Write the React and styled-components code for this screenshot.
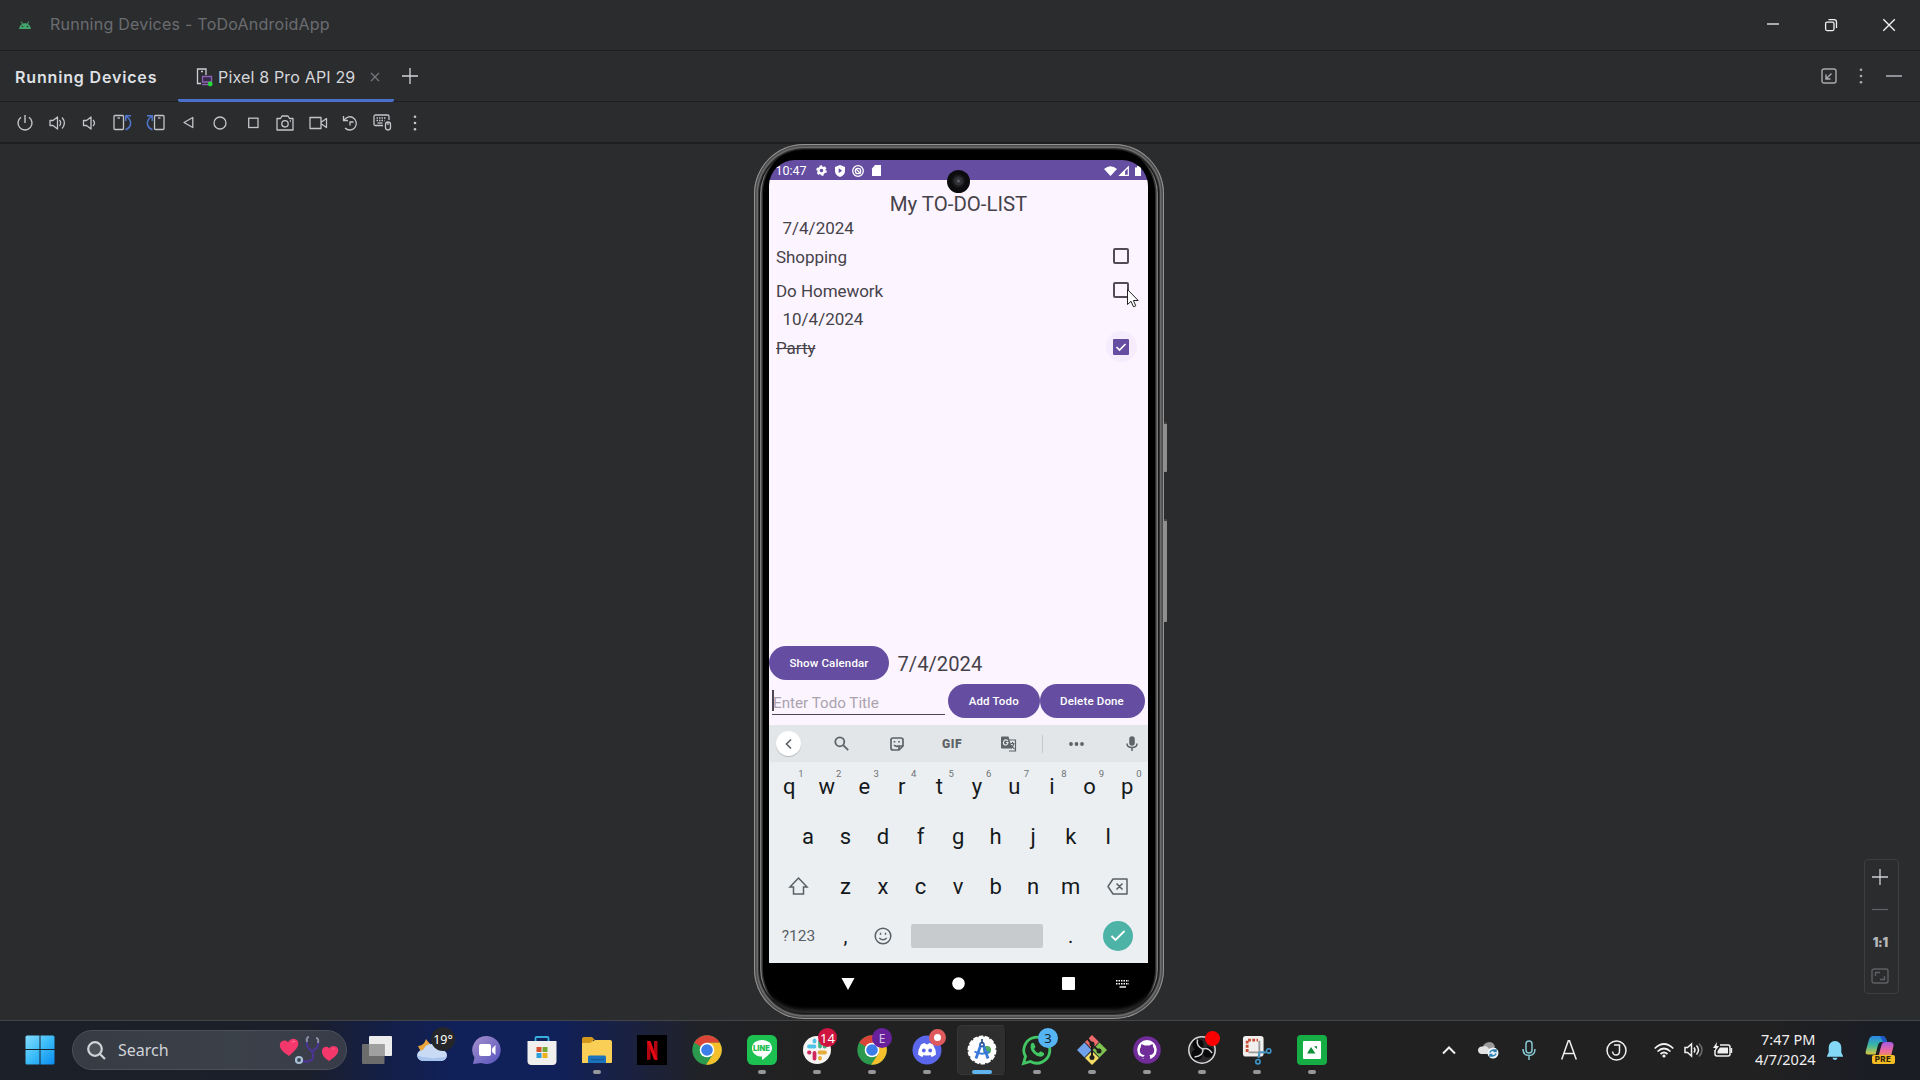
import React from 'react';
import styled, { createGlobalStyle } from 'styled-components';

const Global = createGlobalStyle`
  * { box-sizing: border-box; }
  html, body { margin: 0; padding: 0; background: #2b2c2e; overflow: hidden; }
`;

const Page = styled.div`
  width: 1920px;
  height: 1080px;
  display: flex;
  flex-direction: column;
  background: #2b2c2e;
  font-family: Inter, "Liberation Sans", sans-serif;
  overflow: hidden;
`;

const Icon = styled.svg`
  display: block;
  flex: none;
  overflow: visible;
  fill: none;
  stroke: currentColor;
  stroke-width: ${p => p.$w || 1.3};
`;

/* ---------- Studio window chrome ---------- */

const Bar = styled.div`
  display: flex;
  align-items: center;
  flex: none;
  height: ${p => p.$h}px;
  border-bottom: ${p => p.$line || 1}px solid #1e1f22;
`;

const WindowTitle = styled.div`
  margin-left: 19px;
  padding-bottom: 2px;
  font-size: 16px;
  letter-spacing: 0.24px;
  color: #6a6c70;
  flex: 1;
`;

const AppLogo = styled.div`
  margin-left: 19px;
  width: 12px;
`;

const WindowButton = styled.div`
  width: 58px;
  display: flex;
  justify-content: center;
  padding: 0 4px 0 0;
  color: #f2f2f2;
`;

const PaneTitle = styled.div`
  width: 178px;
  padding: 2px 0 0 15px;
  font-size: 16px;
  font-weight: 600;
  letter-spacing: 0.84px;
  color: #dfe1e5;
`;

const Tab = styled.div`
  width: 216px;
  height: 51px;
  padding: 3px 0 0 18px;
  display: flex;
  align-items: center;
  align-self: flex-start;
  color: #d5d7db;
  font-size: 16px;
  border-bottom: 3px solid #4a70cc;
  border-radius: 0 0 2px 2px;
  z-index: 1;
`;

const TabLabel = styled.span`
  width: 152px;
  margin-left: 4px;
  letter-spacing: 0.17px;
  white-space: nowrap;
`;

const PaneActions = styled.div`
  display: flex;
  margin-left: auto;
  color: #a9abaf;
`;

const Slot = styled.div`
  width: ${p => p.$w}px;
  flex: none;
  display: flex;
  align-items: center;
  justify-content: center;
  color: ${p => p.$c || 'inherit'};
`;

const Tools = styled(Bar)`
  padding: 1.5px 0 0 9px;
  color: #c3c5c9;
`;

/* ---------- Emulator ---------- */

const Stage = styled.div`
  height: 876px;
  flex: none;
  display: flex;
  justify-content: center;
  align-items: flex-start;
  padding-right: 3px;
  position: relative;
`;

const Phone = styled.div`
  position: relative;
  width: 410px;
  height: 875px;
  padding: 16px 15.5px 0;
  border-radius: 50px;
  background: #000;
  box-shadow:
    inset 0 0 0 1px #929292,
    inset 0 0 0 2.5px #4c4c4c,
    inset 0 0 0 4px #6b6b6b,
    inset 0 0 0 5px #353535,
    inset 0 0 0 6px #171717,
    inset 7.5px 0 0 0 #7a7a7a,
    inset -7.5px 0 0 0 #7a7a7a,
    inset 9px 0 0 0 #2c2c2c,
    inset -9px 0 0 0 #2c2c2c,
    inset 0 -9px 4px 0 #333;
`;

const SideKey = styled.div`
  position: absolute;
  left: 410px;
  top: ${p => p.$top}px;
  width: 3px;
  height: ${p => p.$h}px;
  background: #8e8e8e;
  border-top: 2px solid #444;
  border-radius: 0 1px 1px 0;
`;

const Camera = styled.div`
  position: absolute;
  left: 193.5px;
  top: 26px;
  width: 23px;
  height: 23px;
  border-radius: 50%;
  background: radial-gradient(circle at 50% 48%, #5d5e64 0 1px, #303136 2px 4px, #19191c 5px 6px, #0c0b0d 7px);
`;

const Screen = styled.div`
  width: 379px;
  display: flex;
  flex-direction: column;
  border-radius: 26px 26px 0 0;
  overflow: hidden;
  font-family: Roboto, sans-serif;
`;

const StatusBar = styled.div`
  height: 20px;
  flex: none;
  display: flex;
  align-items: center;
  padding: 1px 4px 0 6.5px;
  background: #654ea1;
  color: #fff;
  font-size: 12.5px;
`;

const StatusTime = styled.span`
  width: 36.5px;
`;

const StatusSlot = styled.div`
  width: ${p => p.$w}px;
  margin-left: ${p => p.$push ? 'auto' : 0};
  display: flex;
  justify-content: center;
`;

const AppView = styled.div`
  height: 545px;
  background: #fcf5ff;
`;

const TodoArea = styled.div`
  height: 466px;
  padding-top: 10px;
  color: #46424a;
`;

const ListTitle = styled.div`
  height: 26.5px;
  line-height: 28px;
  text-align: center;
  font-size: 20.4px;
`;

const DateHeading = styled.div`
  height: 23.2px;
  line-height: 22.5px;
  padding-left: 13.5px;
  font-size: 17px;
`;

const TodoRow = styled.div`
  height: 34px;
  display: flex;
  align-items: center;
  justify-content: space-between;
  padding: 0 19px 0 7px;
  font-size: 17px;
  letter-spacing: -0.05px;
  text-decoration: ${p => p.$done ? 'line-through' : 'none'};
`;

const Check = styled.span`
  width: 16px;
  height: 16px;
  margin-bottom: ${p => p.$on ? 0 : 2}px;
  border-radius: ${p => p.$on ? 1 : 2}px;
  border: ${p => p.$on ? 0 : '2px solid #514c57'};
  background: ${p => p.$on ? '#654ea1' : 'transparent'};
  color: #fff;
  display: flex;
  align-items: center;
  justify-content: center;
`;

const Halo = styled.span`
  width: 31px;
  height: 31px;
  margin: 0 -7.5px 2px 0;
  border-radius: 50%;
  background: #f5ecfd;
  display: flex;
  align-items: center;
  justify-content: center;
`;

const Pill = styled.button`
  width: ${p => p.$w}px;
  height: 34px;
  padding: 0;
  flex: none;
  border: 0;
  border-radius: 17px;
  background: #654ea1;
  color: #fff;
  font: 500 11.5px Roboto, sans-serif;
  letter-spacing: 0.15px;
`;

const FormRow = styled.div`
  display: flex;
  align-items: center;
  height: ${p => p.$h}px;
  padding: ${p => p.$top || 0}px 0 0 ${p => p.$pad || 0}px;
`;

const PickedDate = styled.div`
  margin-left: 8.5px;
  padding-top: 1px;
  font-size: 20.2px;
  color: #46424a;
`;

const Field = styled.div`
  width: 173px;
  height: 28px;
  margin: 0 3px 0 0;
  border-bottom: 1px solid #4b464f;
  color: #aaa3ae;
  font-size: 15.2px;
  padding-top: 4px;
  display: flex;
  align-items: center;
`;

const Caret = styled.span`
  width: 1.5px;
  height: 21px;
  margin: -4px -0.5px 0 0;
  background: #4b464f;
`;

/* ---------- Soft keyboard ---------- */

const Suggestions = styled.div`
  height: 37px;
  flex: none;
  display: flex;
  align-items: center;
  background: #e3e6e8;
  color: #5d6367;
`;

const RoundBack = styled.div`
  width: 25px;
  height: 25px;
  border-radius: 50%;
  background: #fff;
  box-shadow: 0 1px 1px #0003;
  display: flex;
  align-items: center;
  justify-content: center;
`;

const Gif = styled.span`
  font: 900 12px Roboto, sans-serif;
  letter-spacing: 0.6px;
`;

const Divider = styled.div`
  width: 1px;
  height: 18px;
  background: #c6cacc;
`;

const Keys = styled.div`
  height: 201px;
  padding: 0 2px 0 1.2px;
  background: #eceff1;
  color: #14191c;
`;

const KeyRow = styled.div`
  height: 49.7px;
  display: flex;
  justify-content: center;
`;

const Key = styled.div`
  width: ${p => 37.56 * (p.$span || 1)}px;
  position: relative;
  display: flex;
  align-items: center;
  justify-content: center;
  font-size: ${p => p.$size || 22}px;
  color: ${p => p.$dim ? '#596066' : 'inherit'};
`;

const Hint = styled.sup`
  position: absolute;
  left: 28px;
  top: 6px;
  font-size: 9.5px;
  line-height: 12px;
  color: #6d7377;
`;

const SpaceBar = styled.div`
  width: 132px;
  height: 24px;
  border-radius: 2px;
  background: #c8cbcd;
`;

const Enter = styled.div`
  width: 30px;
  height: 30px;
  border-radius: 50%;
  background: #4cb3a6;
  color: #fff;
  display: flex;
  align-items: center;
  justify-content: center;
`;

const NavBar = styled.div`
  height: 41px;
  color: #fff;
  display: flex;
  align-items: center;
`;

const Pointer = styled.div`
  position: absolute;
  left: 1127px;
  top: 145px;
`;

const ZoomPanel = styled.div`
  position: absolute;
  left: 1864px;
  top: 715px;
  width: 35px;
  height: 135px;
  border: 1px solid #3d3f42;
  border-radius: 4px;
  padding-right: 2.5px;
`;

const ZoomItem = styled.div`
  height: 33px;
  display: flex;
  align-items: center;
  justify-content: center;
  color: ${p => p.$c};
  font: 900 12.5px Inter, sans-serif;
  letter-spacing: -0.3px;
`;

/* ---------- Taskbar ---------- */

const Taskbar = styled.div`
  height: 60px;
  flex: none;
  position: relative;
  display: flex;
  align-items: center;
  padding: 0 0 1px 12.5px;
  border-top: 1px solid #444548;
  background: linear-gradient(90deg, #1c2029 0, #1b1f29 300px, #141f47 385px, #102058 450px, #102058 560px, #1a2142 625px, #212227 700px, #212121 800px, #212121 1760px, #1b1d25 1880px);
  color: #f0f0f0;
  font-family: "Noto Sans", sans-serif;
`;

const Cell = styled.div`
  width: 55px;
  height: 58px;
  flex: none;
  position: relative;
  display: flex;
  align-items: center;
  justify-content: center;
`;

const Art = styled.div`
  position: relative;
  display: flex;
  justify-content: center;
`;

const Highlight = styled.div`
  position: absolute;
  left: 3px;
  top: 4px;
  width: 49px;
  height: 50px;
  border-radius: 5px;
  background: #2e2e2e;
  border: 1px solid #363636;
  border-right-color: #1c1c1c;
`;

const Running = styled.div`
  position: absolute;
  left: 50%;
  bottom: 5px;
  width: ${p => p.$active ? 20 : 8}px;
  height: 4px;
  transform: translateX(-50%);
  border-radius: 2px;
  background: ${p => p.$active ? '#61b5ee' : '#96979a'};
`;

const Badge = styled.div`
  position: absolute;
  left: ${p => p.$x}px;
  top: ${p => p.$y}px;
  width: ${p => p.$s}px;
  height: ${p => p.$s}px;
  border-radius: 50%;
  background: ${p => p.$bg};
  color: ${p => p.$c || '#fff'};
  border: ${p => p.$ring || '0'};
  font-size: ${p => p.$fs || 12}px;
  display: flex;
  align-items: center;
  justify-content: center;
`;

const SearchBox = styled.div`
  width: 275px;
  height: 40px;
  margin: 0 2px 0 4.5px;
  flex: none;
  border-radius: 20px;
  background: linear-gradient(90deg, #363b44, #3b4149 60%, #383c4a);
  border: 1px solid #4b5059;
  display: flex;
  align-items: center;
  padding-left: 14px;
  font-size: 16px;
  color: #d0d3d7;
`;

const SearchLabel = styled.span`
  margin-left: 12px;
  width: 161px;
`;

const Tray = styled.div`
  display: flex;
  align-items: center;
  margin-left: 89.5px;
`;

const Clock = styled.div`
  width: 75px;
  padding-bottom: 2px;
  text-align: right;
  font-size: 14.5px;
  line-height: 20px;
  white-space: nowrap;
`;

const CopilotBox = styled.div`
  position: relative;
  width: 30px;
  height: 30px;
`;

const Pre = styled.span`
  position: absolute;
  left: 7px;
  top: 20px;
  width: 23px;
  height: 9px;
  border-radius: 2px;
  background: #f5bd24;
  color: #30250a;
  font: 800 8px/9px Inter, sans-serif;
  text-align: center;
  letter-spacing: 0.3px;
`;

const LineText = styled.span`
  position: absolute;
  top: 9px;
  font: 900 7.5px/9px Inter, sans-serif;
  color: #1fbf55;
`;

/* ---------- Drawings ---------- */

const S = ({ s = 16, w, h, vb, sw, children, ...rest }) => (
  <Icon width={w || s} height={h || s} viewBox={vb || `0 0 ${w || s} ${h || s}`} $w={sw} {...rest}>{children}</Icon>
);

const Plus = () => <S s={16}><path d="M8 0v16M0 8h16" /></S>;

const MoreDots = () => (
  <S w={4} h={16} stroke="none"><g fill="currentColor" stroke="none"><circle cx="2" cy="1.700" r="1.300" /><circle cx="2" cy="8" r="1.300" /><circle cx="2" cy="14.300" r="1.300" /></g></S>
);

const toolIcons = [
  <S s={16} sw={1.4}><path d="M8 0v8M4 2.2a7 7 0 1 0 8 0" /></S>,
  <S w={17} h={16}><path d="M1 5.500h3L8.500 2v12L4 10.500H1z" strokeLinejoin="round" /><path d="M10.500 5Q12.800 8 10.500 11M13 2.500Q17.800 8 13 13.500" /></S>,
  <S w={17} h={16}><path d="M1.500 5.500h3L9 2v12L4.500 10.500h-3z" strokeLinejoin="round" /><path d="M11 5Q14 8 11 11" /></S>,
  <S w={19} h={17}><rect x="1" y="1.500" width="9.500" height="14" rx="1" /><path d="M4.500 4h2.500" /><path stroke="#5078d0" strokeWidth="1.500" d="M12.800 7V1.800H18M13 2q5.500 4 4.500 8.500-.8 3.500-5 5.300" /></S>,
  <S w={19} h={17}><rect x="8.500" y="1.500" width="9.500" height="14" rx="1" /><path d="M12 4h2.500" /><path stroke="#5078d0" strokeWidth="1.500" d="M6.200 7V1.800H1M6 2Q.5 6 1.500 10.500q.8 3.500 5 5.300" /></S>,
  <S w={12} h={13}><path d="M10.800 1.500v10L2 6.500z" strokeLinejoin="round" /></S>,
  <S s={14}><circle cx="7" cy="7" r="6" /></S>,
  <S s={12}><rect x="1.700" y="1.200" width="9.300" height="9.300" /></S>,
  <S w={18} h={16}><path d="M1 3.500h3.500l1.500-2.500h6l1.500 2.500H17V15H1z" strokeLinejoin="round" /><circle cx="9" cy="8.800" r="3.200" /><path d="M13.800 6h1.200" /></S>,
  <S w={18} h={14}><path d="M1 1.500h11v11H1zM12.500 6L17.500 2.500v9L12.500 8" strokeLinejoin="round" /></S>,
  <S s={16}><path d="M1.500 1v4.500H6M1.800 5.500A6.600 6.600 0 1 1 3 13M8 10.500V7h3.500" /></S>,
  <S w={19} h={17}><path d="M10 11.500H2.500q-1.500 0-1.500-1.500V2.500Q1 1 2.500 1h12Q16 1 16 2.500V6" /><path d="M3.500 4h10M3.500 6.500h8" strokeDasharray="1.500 1" /><path d="M4.500 9h5" /><rect x="12.500" y="8" width="5" height="8" rx="2.400" /><path d="M15 8v3" /></S>,
  <MoreDots />,
];

const Chrome = () => (
  <S s={30} vb="0 0 48 48" sw={0.01}>
    <circle cx="24" cy="24" r="23.500" fill="#2c9a4e" />
    <path fill="#db4437" d="M24 24L3.700 12.200A23.500 23.500 0 0 1 44.400 12.300H24z" />
    <path fill="#f6bf2c" d="M44.400 12.300A23.500 23.500 0 0 1 22.500 47.500L34.200 29.800 24 12.300z" />
    <circle cx="24" cy="24" r="11.700" fill="#fff" />
    <circle cx="24" cy="24" r="9.300" fill="#3b7de9" />
  </S>
);

const Hearts = () => (
  <S w={62} h={28} sw={0.01}>
    <path fill="#f5386b" d="M10 20C6 17 .5 14 .800 8.500 1.500 4 7.500 3.300 9 6.500 11 2 17 1.500 19 5.500c2 5-4 10-9 14.500z" />
    <path fill="#f5386b" d="M50 25c-4.500-3-7.500-6-7-10.500.5-4 5.500-4.800 7.500-2C52 9 58 9.500 59 13c1.300 5-4 8.500-9 12z" />
    <path fill="#ff7c9d" d="M12 7q2.500-4 5-1-2-1-5 1zM52 14q2-3 4-1.200-2-.2-4 1.200z" />
    <path stroke="#4b3494" strokeWidth="2.200" fill="none" d="M28 5q-1 7 5 10 7-3 6-9M33 15q3 8-2 10-5 1.500-8-.5" />
    <path stroke="#8d8fa5" strokeWidth="2" fill="none" d="M28 6q-1-5 2-5M39 7q1-5-2-5" />
    <circle cx="20" cy="24" r="3" fill="#3a4758" stroke="#a8c0d4" strokeWidth="2.200" />
  </S>
);

const WindowsLogo = () => (
  <S s={30} sw={0.01}>
    <defs><linearGradient id="win" x1="0" y1="0" x2="1" y2="1"><stop offset="0" stopColor="#86dcff" /><stop offset=".5" stopColor="#3bbcf8" /><stop offset="1" stopColor="#0a8cf0" /></linearGradient></defs>
    <path fill="url(#win)" d="M2 .500h12.500V14H.500V2Q.500.500 2 .500zM15.500.500H28q1.500 0 1.500 1.500v12h-14zM.500 15h14v14.500H2Q.500 29.500.500 28zM15.500 15h14v13q0 1.500-1.500 1.500H15.500z" />
  </S>
);

const TaskView = () => (
  <S w={30} h={28} sw={0.01}><rect x="7" y="0" width="23" height="20" rx="1" fill="#ececec" /><rect x="0" y="8" width="22.500" height="20" rx="1" fill="#6c6c6c" /><rect x="7" y="8" width="15.500" height="12" fill="#a0a0a0" /></S>
);

const Weather = () => (
  <S w={32} h={24} sw={0.01}>
    <path fill="#eba53b" d="M2 8q6 0 8-7 4 6 9 8l-6 7-8-2z" />
    <path fill="#c9daf5" d="M8 23q-7-.500-7-6 1-5 6-5 3-7 10-6 6 1 7 6 7 0 7 5.500-1 5-6 5.500z" />
    <path fill="#a9c3ef" d="M1 17q1 6 7 6h17q5-.500 6-5-3 2-8 1.500-7 1.500-11 0-7 0-11-2.500z" />
  </S>
);

const Chat = () => (
  <S s={30} sw={0.01}>
    <defs><linearGradient id="chat" x1="0" y1="0" x2="1" y2="1"><stop offset="0" stopColor="#a58fcb" /><stop offset="1" stopColor="#5654c0" /></linearGradient></defs>
    <path fill="url(#chat)" d="M15 1a14 14 0 1 1-5.500 27L1 29l1.500-6.500A14 14 0 0 1 15 1z" />
    <rect x="7" y="9" width="12" height="12" rx="2" fill="#fff" /><path fill="#fff" d="M20 13.500l3.500-3.500v10L20 17z" />
  </S>
);

const Store = () => (
  <S s={30} sw={0.01}>
    <path d="M8.500 7V3q0-1 1-1h11q1 0 1 1v4" stroke="#38aede" strokeWidth="1.800" fill="none" />
    <path fill="#f0f0ee" d="M.500 6h29v20q0 4-4 4h-21q-4 0-4-4z" />
    <path fill="#d5512b" d="M9.500 12h5v5h-5z" /><path fill="#74a832" d="M15.500 12h5v5h-5z" /><path fill="#2f9fd9" d="M9.500 18h5v5h-5z" /><path fill="#efb11f" d="M15.500 18h5v5h-5z" />
  </S>
);

const Folder = () => (
  <S s={30} sw={0.01}>
    <path fill="#d3971c" d="M0 4q0-2 2-2h8l3 3h-2v4H0z" /><path fill="#f9cf55" d="M0 8h8l5-3h15q2 0 2 2v20q0 1-1 1H0z" />
    <path fill="#1a74bd" d="M6 28v-6q0-1.500 1.500-1.500h15q1.500 0 1.500 1.500v6z" /><path fill="#165c97" d="M9 24h13v1.200H9z" />
  </S>
);

const Netflix = () => (
  <S s={30} sw={0.01}><path fill="#000" d="M0 0h30v30H0z" /><path fill="#b1060f" d="M10 6h3.500v18.500L10 25zM17 6h3.500v19l-3.500-.500z" /><path fill="#e50914" d="M10 6h3.500l7 19-3.500-.500z" /></S>
);

const Line = () => (
  <>
    <S s={30} sw={0.01}><rect width="30" height="30" rx="6" fill="#1dc152" /><path fill="#fff" d="M15 5c6 0 10 3.600 10 8.200C25 18 19 22 15 25v-3.500c-6 0-10-3.700-10-8.300S9 5 15 5z" /></S>
    <LineText>LINE</LineText>
  </>
);

const Slack = () => (
  <S s={30} sw={0.01}>
    <circle cx="15" cy="15" r="14" fill="#f7f4f4" />
    <g strokeWidth="3.800" strokeLinecap="round">
      <path stroke="#4fc4e8" d="M7 11.500h5.500M12.500 5.500v1" /><path stroke="#40b584" d="M18 6.500v5M22.500 11.500h.5" />
      <path stroke="#e5ae38" d="M17.500 17.500H23M18 23v.500" /><path stroke="#cf285d" d="M12.500 18v5.500M7 17.500h.500" />
    </g>
  </S>
);

const Discord = () => (
  <S s={30} sw={0.01}>
    <circle cx="15" cy="15" r="14.500" fill="#5b67ea" />
    <path fill="#fff" d="M9 9.500q2-1.200 4-1.500l.800 1.300h2.400L17 8q2 .3 4 1.500 3 5 3 10-2 1.800-4.500 2.500l-1-2q-3.500 1-7 0l-1 2Q8 21.300 6 19.500q0-5 3-10z" /><circle cx="11.800" cy="15.500" r="1.900" fill="#5b67ea" /><circle cx="18.200" cy="15.500" r="1.900" fill="#5b67ea" />
  </S>
);

const Studio = () => (
  <S s={30} sw={0.01}>
    <circle cx="15" cy="15" r="13.500" fill="#fff" stroke="#fff" strokeWidth="2" strokeDasharray="4.500 1.500" />
    <circle cx="20" cy="15" r="4" fill="#4cab5c" />
    <path stroke="#3a78dc" strokeWidth="2.800" d="M14.500 8L9 23.500M15.500 8L21 23.500" /><path stroke="#3a78dc" strokeWidth="2" d="M7.500 16.500q7.500 4.500 15 0" />
    <circle cx="15" cy="9.500" r="2.700" fill="#2f5fae" /><path stroke="#23437c" strokeWidth="1.600" d="M15 4v5" /><circle cx="15" cy="9.500" r="1.100" fill="#fff" />
  </S>
);

const WhatsApp = () => (
  <S s={32} sw={0.01}>
    <path stroke="#42c764" strokeWidth="2.800" fill="#20251f" d="M2.500 29.500l2-7a13 13 0 1 1 5 5z" />
    <path fill="#42c764" d="M10 10q1.500-2 3-.500l1.500 3.500-1.500 2q1.500 3 4.500 4l2-1.800 3.500 1.800q.5 3-3 3.800-3.500.4-7.500-3.500t-2.500-9.300z" />
  </S>
);

const Git = () => (
  <S s={30} sw={0.01}>
    <path fill="#ee6b6b" d="M15 0l7 7-7 7-7-7z" /><path fill="#6fa2ea" d="M7.500 7.500l7 7.500-7 7.500L0 15z" /><path fill="#81c351" d="M22.500 7.500L30 15l-7.500 7.500-7-7.500z" /><path fill="#f3dc64" d="M15 16l7 7-7 7-7-7z" />
    <path stroke="#1e1e1e" strokeWidth="2" d="M10 3l5 6v14M15 10l7 6" /><circle cx="15" cy="9" r="2.500" fill="#1e1e1e" /><circle cx="15" cy="22.500" r="2.500" fill="#1e1e1e" /><circle cx="22" cy="16" r="2.500" fill="#1e1e1e" />
  </S>
);

const GitHub = () => (
  <S s={28} vb="0 0 30 30" sw={0.01}>
    <circle cx="15" cy="15" r="14.800" fill="#702c98" /><circle cx="15" cy="14.800" r="10.500" fill="#fff" />
    <path fill="#702c98" d="M9 8.500l3.500 1.800q2.500-.5 5 0L21 8.500l.7 3.500q1.300 1.800 1 4-.6 4-5.200 4.500.9 1 .9 2.500v4h-6.900v-3q-4 .6-4.500-3.300 2.500 2.300 4.500 1.200l1-1.400Q7.900 20 7.300 16q-.2-2.200 1-4z" />
  </S>
);

const Obs = () => (
  <S s={30} sw={0.01}>
    <circle cx="15" cy="15" r="13.200" fill="#29272a" stroke="#d9d9d9" strokeWidth="1.500" />
    <g fill="#08080a"><circle cx="11" cy="9.500" r="5.500" /><circle cx="10" cy="19.500" r="5.500" /><circle cx="21" cy="17" r="5.500" /></g>
    <g stroke="#d0d0d0" strokeWidth="1.500" fill="none"><path d="M10.500 4.500q-1.500 7 5.500 9.500" /><path d="M16 14q5-2 9 4" /><path d="M16 14q.5 7-8.500 8" /></g>
  </S>
);

const Snip = () => (
  <S s={30} vb="0 0 32 32" sw={0.01}>
    <rect x="1" y="1" width="22" height="22" rx="3" fill="#f2f0ef" /><path d="M5.500 18V5.500H17" fill="none" stroke="#c74b32" strokeWidth="3" strokeDasharray="3 1.500" />
    <path d="M18.500 6v18M7 18.500h18" stroke="#9a9a9c" strokeWidth="2" /><path d="M18.500 18.500l-1 6M18.500 18.500h7" stroke="#3f97cc" strokeWidth="2" /><circle cx="28.500" cy="17" r="2.300" fill="none" stroke="#3f97cc" strokeWidth="1.700" /><circle cx="17" cy="28.500" r="2.300" fill="none" stroke="#3f97cc" strokeWidth="1.700" />
  </S>
);

const Photo = () => (
  <S s={30} sw={0.01}><rect width="30" height="30" rx="4" fill="#17ad45" /><rect x="6" y="6" width="18" height="18" rx="1" fill="#fff" /><path fill="#12903b" d="M10 18.500l4-6.500 4.500 6.500zM17 11.500l3-.500v3z" /></S>
);

const Copilot = () => (
  <CopilotBox>
    <S s={30} sw={0.01}>
      <defs>
        <linearGradient id="cpa" x1="0" y1="0" x2="0" y2="1"><stop offset="0" stopColor="#2a86e8" /><stop offset=".5" stopColor="#3bb8a2" /><stop offset="1" stopColor="#d8c63c" /></linearGradient>
        <linearGradient id="cpb" x1="0" y1="0" x2="0" y2="1"><stop offset="0" stopColor="#a45ae6" /><stop offset=".6" stopColor="#ea6aa0" /><stop offset="1" stopColor="#f08a62" /></linearGradient>
      </defs>
      <path fill="url(#cpa)" d="M8 1h9q3 0 4 3l1 3h-6q-2 0-3 3l-2.500 9.500H3Q0 19.500.800 16L4 4.500Q5 1 8 1z" />
      <path fill="url(#cpb)" d="M20 7h5q4 0 3.500 4L26 21H13.500l3-11q.8-3 3.500-3z" />
      <path fill="#1f58c8" d="M15 1h2q3 0 4 3l1 3h-4z" />
    </S>
    <Pre>PRE</Pre>
  </CopilotBox>
);

const apps = [
  { art: <Chat /> }, { art: <Store /> }, { art: <Folder />, run: true }, { art: <Netflix /> }, { art: <Chrome /> },
  { art: <Line />, run: true },
  { art: <Slack />, run: true, badge: <Badge $x={29} $y={7} $s={19} $bg="#cf1440" $fs={13}>14</Badge> },
  { art: <Chrome />, run: true, badge: <Badge $x={28} $y={7} $s={20} $bg="#68219b" $c="#d9c2e8">E</Badge> },
  { art: <Discord />, run: true, badge: <Badge $x={30} $y={8} $s={17} $bg="#fff" $ring="5px solid #df5a5c" /> },
  { art: <Studio />, run: true, active: true },
  { art: <WhatsApp />, run: true, badge: <Badge $x={29} $y={7} $s={20} $bg="#55b4f2" $c="#14232e" $fs={13}>3</Badge> },
  { art: <Git />, run: true }, { art: <GitHub />, run: true },
  { art: <Obs />, run: true, badge: <Badge $x={31} $y={10} $s={15} $bg="#fb0000" /> },
  { art: <Snip />, run: true }, { art: <Photo />, run: true },
];

const topLetters = 'qwertyuiop'.split('');
const hints = '1234567890'.split('');

const Keyboard = () => (
  <>
    <Suggestions>
      <Slot $w={39}><RoundBack><S s={10} sw={1.7}><path d="M7 .500L2.500 5 7 9.500" /></S></RoundBack></Slot>
      <Slot $w={66}><S s={15} sw={1.8}><circle cx="5.800" cy="5.800" r="4.500" /><path d="M9.200 9.200l5 5" /></S></Slot>
      <Slot $w={46}><S s={14} sw={1.7}><path d="M9 13H3q-2 0-2-2V3q0-2 2-2h8q2 0 2 2v6zM9 13V9h4" /><path d="M4.500 4v1.500M9 4v1.500M4 8q2.500 2.500 4.500.500" /></S></Slot>
      <Slot $w={64}><Gif>GIF</Gif></Slot>
      <Slot $w={50}><S s={16} sw={1.2}><path d="M6 4h8.500v11H8" /><path stroke="none" fill="currentColor" d="M1 .500h6.500L11 12.500H1q-1 0-1-1v-10q0-1 1-1z" /><path stroke="#e3e6e8" d="M7 5Q4.500 2.800 3 5q-1.500 3 1 4 2.500.300 3-2.500H5" /><path d="M9.500 7.500h4M11.500 6v1.500M13 7.500q-1 3-3 4.500M10 9q1 2 3.500 4" /></S></Slot>
      <Slot $w={17}><Divider /></Slot>
      <Slot $w={51}><S w={15} h={4} stroke="none"><g fill="currentColor" stroke="none"><circle cx="2" cy="2" r="1.900" /><circle cx="7.500" cy="2" r="1.900" /><circle cx="13" cy="2" r="1.900" /></g></S></Slot>
      <Slot $w={59}><S w={12} h={16} sw={1.5}><rect x="4" y="1" width="4" height="8" rx="2" fill="currentColor" /><path d="M1 7.500q0 4 5 4t5-4M6 11.500V15" /></S></Slot>
    </Suggestions>
    <Keys>
      <KeyRow>{topLetters.map((l, i) => <Key key={l}>{l}<Hint>{hints[i]}</Hint></Key>)}</KeyRow>
      <KeyRow>{'asdfghjkl'.split('').map(l => <Key key={l}>{l}</Key>)}</KeyRow>
      <KeyRow>
        <Key $span={1.5} $dim><S w={19} h={18} sw={1.5}><path d="M9.500 1L18 10h-3.500v7h-10v-7H1z" /></S></Key>
        {'zxcvbnm'.split('').map(l => <Key key={l}>{l}</Key>)}
        <Key $span={1.5} $dim><S w={21} h={17} sw={1.5}><path d="M6 1h14v15H6L1 8.500zM9.500 5.500l6 6M15.500 5.500l-6 6" strokeLinejoin="round" /></S></Key>
      </KeyRow>
      <KeyRow>
        <Key $span={1.5} $dim $size={15.5}>?123</Key>
        <Key $size={20}>,</Key>
        <Key $dim><S s={18} sw={1.5}><circle cx="9" cy="9" r="7.800" /><path d="M6.500 5.700v2M11.500 5.700v2M5.300 11q3.700 3.600 7.400 0" /></S></Key>
        <Key $span={4}><SpaceBar /></Key>
        <Key $size={20}>.</Key>
        <Key $span={1.5}><Enter><S w={16} h={12} sw={1.8}><path d="M1.500 6l4 4 9-9" /></S></Enter></Key>
      </KeyRow>
    </Keys>
    <NavBar>
      <Slot $w={158}><S w={14} h={12} sw={0.01}><path fill="#fff" d="M.5 0h13L7 12z" /></S></Slot>
      <Slot $w={63}><S s={13} sw={0.01}><circle cx="6.500" cy="6.500" r="6.300" fill="#fff" /></S></Slot>
      <Slot $w={53} />
      <Slot $w={50}><S s={13} sw={0.01}><rect width="13" height="13" rx="1" fill="#fff" /></S></Slot>
      <Slot $w={60}><S w={14} h={8} sw={1.4}><path d="M0 .7h13M0 3.700h13" strokeDasharray="1.500 1" /><path d="M3.500 7h6.500" /></S></Slot>
    </NavBar>
  </>
);

export default function App() {
  return (
    <Page>
      <Global />
      <Bar $h={51}>
        <AppLogo><S w={12} h={8} sw={0.01}><path fill="#43a56b" d="M0 8q.3-3.400 3-5L1.800.700l.7-.4L3.800 2.600q2.200-.8 4.400 0L9.500.300l.7.400L9 3q2.700 1.600 3 5z" /><circle cx="3.500" cy="5.500" r=".8" fill="#2b2c2e" /><circle cx="8.500" cy="5.500" r=".8" fill="#2b2c2e" /></S></AppLogo>
        <WindowTitle>Running Devices - ToDoAndroidApp</WindowTitle>
        <WindowButton><S s={12}><path d="M0 5h12" /></S></WindowButton>
        <WindowButton><S s={12}><rect x=".6" y="3.200" width="8.400" height="8.400" rx="1.500" /><path d="M3.500.700h5.500q2.500 0 2.500 2.500V9" /></S></WindowButton>
        <WindowButton><S s={12}><path d="M.3.300l11.500 11.500M11.800.300L.3 11.800" /></S></WindowButton>
      </Bar>
      <Bar $h={51}>
        <PaneTitle>Running Devices</PaneTitle>
        <Tab>
          <S w={18} h={18}><path d="M5 15.500H1.500V1H10v6M5 3.500h2" stroke="#ced0d6" /><path d="M6.500 8.500h9v5.500h-9zM6 16.500h6" stroke="#8b62b5" fill="#38294a" /><circle cx="14.200" cy="16" r="2.400" fill="#27d83a" stroke="none" /></S>
          <TabLabel>Pixel 8 Pro API 29</TabLabel>
          <S s={10}><path d="M1 1l8 8M9 1L1 9" stroke="#75777b" /></S>
        </Tab>
        <Slot $w={31} $c="#d2d4d8"><Plus /></Slot>
        <PaneActions>
          <Slot $w={32}><S s={16} sw={1.4}><rect x="1" y="1" width="14" height="14" rx="2" /><path d="M10.500 5.500L5 11M5 6.500V11h4.500" /></S></Slot>
          <Slot $w={32}><MoreDots /></Slot>
          <Slot $w={34}><S s={16} sw={1.6}><path d="M0 8h16" /></S></Slot>
          <Slot $w={9} />
        </PaneActions>
      </Bar>
      <Tools $h={42} $line={2}>
        {toolIcons.map((ic, i) => <Slot $w={32.5} key={i}>{ic}</Slot>)}
      </Tools>

      <Stage>
        <Phone>
          <Screen>
            <StatusBar>
              <StatusTime>10:47</StatusTime>
              <StatusSlot $w={18.5}><S s={11} sw={2.4}><circle cx="5.500" cy="5.500" r="3" /><circle cx="5.500" cy="5.500" r="4.500" strokeWidth="1.600" strokeDasharray="2.400 2.300" /></S></StatusSlot>
              <StatusSlot $w={18.5}><S w={10} h={12} sw={0.01}><path fill="#fff" d="M5 0l5 2v4q0 4-5 6-5-2-5-6V2z" /><path fill="#654ea1" d="M3.700 3.300L7.200 5.700 3.700 8z" /></S></StatusSlot>
              <StatusSlot $w={18.5}><S s={12}><circle cx="6" cy="6" r="5.300" /><circle cx="6" cy="6" r="2.700" /><path d="M4 4l4.500 4.500" /></S></StatusSlot>
              <StatusSlot $w={18.5}><S w={9} h={11} sw={0.01}><path fill="#fff" d="M3 0h6v11H0V3.500z" /></S></StatusSlot>
              <StatusSlot $w={14} $push><S w={13} h={10} sw={0.01}><path fill="#fff" d="M0 3q6.500-5.500 13 0L6.500 10z" /></S></StatusSlot>
              <StatusSlot $w={14}><S s={10} sw={1.2}><path d="M9.300 1v8.400H1z" /><path fill="#fff" d="M5.500 5v4.400H1z" /></S></StatusSlot>
              <StatusSlot $w={13}><S w={6} h={10} sw={0.01}><path fill="#fff" d="M0 1.500h2V0h4v10H0z" /></S></StatusSlot>
            </StatusBar>
            <AppView>
              <TodoArea>
                <ListTitle>My TO-DO-LIST</ListTitle>
                <DateHeading>7/4/2024</DateHeading>
                <TodoRow>Shopping<Check /></TodoRow>
                <TodoRow>Do Homework<Check /></TodoRow>
                <DateHeading>10/4/2024</DateHeading>
                <TodoRow $done>Party<Halo><Check $on><S w={10} h={8} sw={1.6}><path d="M.500 4l3 3L9.500 1" /></S></Check></Halo></TodoRow>
              </TodoArea>
              <FormRow $h={34}>
                <Pill $w={120}>Show Calendar</Pill>
                <PickedDate>7/4/2024</PickedDate>
              </FormRow>
              <FormRow $h={40} $top={2} $pad={3}>
                <Field><Caret />Enter Todo Title</Field>
                <Pill $w={91.5}>Add Todo</Pill>
                <Pill $w={105}>Delete Done</Pill>
              </FormRow>
            </AppView>
            <Keyboard />
          </Screen>
          <Camera />
          <SideKey $top={278} $h={50} />
          <SideKey $top={375} $h={103} />
        </Phone>
        <Pointer><S w={12} h={19} sw={1}><path fill="#fff" stroke="#222" d="M.500.500v15l3.500-3.200 2.500 5.500 2.300-1-2.400-5.300h4.800z" /></S></Pointer>
        <ZoomPanel>
          <ZoomItem $c="#ced0d6"><Plus /></ZoomItem>
          <ZoomItem $c="#5e6063"><S s={16}><path d="M0 7.500h16" /></S></ZoomItem>
          <ZoomItem $c="#b4b6ba">1:1</ZoomItem>
          <ZoomItem $c="#5e6063"><S w={18} h={16} sw={1.4}><rect x="1" y="1" width="16" height="14" rx="2" /><path d="M4.500 8V4.500H9M13.500 8v3.500H9" /></S></ZoomItem>
        </ZoomPanel>
      </Stage>

      <Taskbar>
        <Cell><WindowsLogo /></Cell>
        <SearchBox>
          <S s={19} sw={2.2}><circle cx="8" cy="8" r="6.800" fill="#4d525a" /><path d="M13 13l5 5" /></S>
          <SearchLabel>Search</SearchLabel>
          <Hearts />
        </SearchBox>
        <Cell><TaskView /></Cell>
        <Cell><Weather /><Badge $x={27} $y={6} $s={24} $bg="#25262a" $fs={12.5}>19°</Badge></Cell>
        {apps.map((a, i) => (
          <Cell key={i}>
            {a.active && <Highlight />}
            <Art>{a.art}</Art>
            {a.badge}
            {a.run && <Running $active={a.active} />}
          </Cell>
        ))}
        <Tray>
          <Slot $w={40}><S w={14} h={8} sw={2}><path d="M1 7.500l6-6 6 6" /></S></Slot>
          <Slot $w={40}><S w={21} h={18} sw={0.01}><path fill="#9a9a9a" d="M4 8q1-6 7-7 5 0 6 5l-5 5z" /><path fill="#e3e3e3" d="M3 13q-3-1-3-4 .500-4 5-3.500Q9 4 11 8l7-1v6z" /><circle cx="15" cy="12" r="5.500" fill="#eef6fb" /><path fill="none" stroke="#2f7fb4" strokeWidth="1.500" d="M11.800 11.500q1.500-3 4.500-2.500l1.500 1.500M18.200 12.500q-1.500 3-4.500 2.500l-1.500-1.500M18 8v2.500h-2.500M12 16v-2.500h2.500" /></S></Slot>
          <Slot $w={40} $c="#86c7d3"><S w={14} h={20} sw={1.5}><rect x="4" y="1" width="6" height="12" rx="3" /><path d="M1 9q0 6.500 6 6.500T13 9M7 15.500V20" /></S></Slot>
          <Slot $w={40}><S w={16} h={20} sw={1.5}><path d="M.7 19.500L7.300.700h1.200l6.800 18.800M3 13.500h10" /></S></Slot>
          <Slot $w={56}><S s={21} sw={1.5}><circle cx="10.500" cy="10.500" r="9.500" /><path d="M8 5h5.500v6q0 4-3.500 4-3 0-3.500-3.500" /></S></Slot>
          <Slot $w={38}><S w={20} h={15} sw={1.7}><path d="M.7 5.500q9.300-9 18.600 0M3.500 8.500q6.500-6 13 0M6.500 11q3.500-3 7 0" /><circle cx="10" cy="13" r="1.600" fill="currentColor" stroke="none" /></S></Slot>
          <Slot $w={22}><S w={19} h={16} sw={1.5}><path d="M1 5.500h2.500L7.500 2v12l-4-3.500H1z" /><path d="M10 5.500q2 2.500 0 5M12.500 3.500q4 4.500 0 9" /><path stroke="#6a6a6a" d="M15 1.500q6 6.500 0 13" /></S></Slot>
          <Slot $w={36}><S w={20} h={16} sw={1.5}><path d="M7 3h8q2 0 2 2v7q0 2-2 2H4q-2 0-2-2V8" /><path fill="currentColor" stroke="none" d="M7 5.500h8v6H4.500V9zM4 0L0 6h2.500L1.500 10 6 4H3.500zM17.500 6h1.700v5h-1.700z" /></S></Slot>
          <Clock>7:47 PM<br />4/7/2024</Clock>
          <Slot $w={38} $c="#82d8f5"><S w={16} h={19} sw={0.01}><path fill="currentColor" d="M8 0q6 .500 6.300 6.500v5L16 15v.800H0V15l1.700-3.500v-5Q2 .500 8 0zM5.500 16.800h5q-.5 2.200-2.500 2.200t-2.500-2.200z" /></S></Slot>
          <Slot $w={52}><Copilot /></Slot>
        </Tray>
      </Taskbar>
    </Page>
  );
}
